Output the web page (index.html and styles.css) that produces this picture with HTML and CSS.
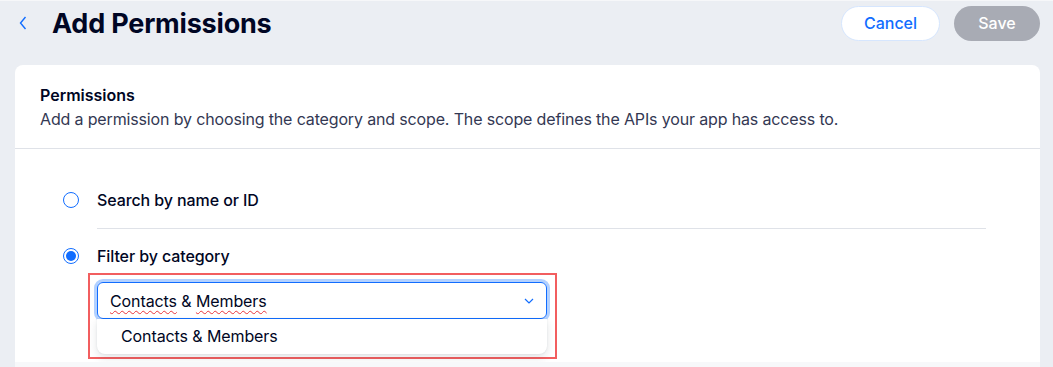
FILE: index.html
```html
<!DOCTYPE html>
<html lang="en">
<head>
  <meta charset="UTF-8">
  <meta name="viewport" content="width=device-width, initial-scale=1.0">
  <title>Add Permissions</title>
  <link rel="stylesheet" href="styles.css">
</head>
<body>
  <header class="page-header">
    <button class="back-btn" aria-label="Back">
      <svg width="8" height="14" viewBox="0 0 8 14"><path d="M6.5 1 L1.5 7 L6.5 13" fill="none" stroke="#116dff" stroke-width="1.4"/></svg>
    </button>
    <h1 class="page-title">Add Permissions</h1>
    <div class="header-actions">
      <button class="btn btn-cancel">Cancel</button>
      <button class="btn btn-save" disabled>Save</button>
    </div>
  </header>

  <section class="card">
    <div class="card-header">
      <h2 class="card-title">Permissions</h2>
      <p class="card-subtitle">Add a permission by choosing the category and scope. The scope defines the APIs your app has access to.</p>
    </div>

    <div class="card-body">
      <label class="radio-row">
        <span class="radio"></span>
        <span class="radio-label">Search by name or ID</span>
      </label>
      <div class="row-divider"></div>
      <label class="radio-row">
        <span class="radio checked"></span>
        <span class="radio-label">Filter by category</span>
      </label>

      <div class="highlight">
        <div class="select">
          <span class="select-value"><span class="typo">Contacts</span> &amp; <span class="typo">Members</span></span>
          <svg width="10" height="6" viewBox="0 0 10 6"><path d="M1 1 L5 5 L9 1" fill="none" stroke="#116dff" stroke-width="1.2"/></svg>
        </div>
        <ul class="dropdown">
          <li class="dropdown-item">Contacts &amp; Members</li>
        </ul>
      </div>
    </div>
    <div class="card-footer"></div>
  </section>
</body>
</html>
```

FILE: styles.css
```css
body {
  margin: 0;
  font-family: Inter, "Noto Sans", sans-serif;
  background: #ebeef3;
  color: #000624;
  border-top: 1px solid #f6f7f9;
}

.page-header {
  display: flex;
  align-items: center;
  height: 44px;
  padding: 0 13px 0 15px;
}

.back-btn {
  background: none;
  border: none;
  padding: 0 4px;
  width: 37px;
  height: 30px;
  display: flex;
  align-items: center;
  cursor: pointer;
}

.page-title {
  margin: 0;
  font-size: 27px;
  font-weight: 700;
  letter-spacing: -0.2px;
  line-height: 1;
  margin-top: 1px;
}

.header-actions {
  margin-left: auto;
  display: flex;
  gap: 14px;
}

.btn {
  height: 35px;
  border-radius: 18px;
  font-family: inherit;
  font-size: 16px;
  font-weight: 500;
  cursor: pointer;
}

.btn-cancel {
  width: 99px;
  background: #fff;
  color: #116dff;
  border: 1px solid #d6e6fe;
}

.btn-save {
  width: 86px;
  background: #a8abb4;
  color: #fff;
  border: none;
}

.card {
  margin: 20px 13px 0 15px;
  background: #fff;
  border-radius: 8px 8px 0 0;
  overflow: hidden;
}

.card-header {
  padding: 18px 25px 17px;
  border-bottom: 1px solid #dfe2e8;
}

.card-title {
  margin: 0;
  font-size: 16px;
  font-weight: 600;
  line-height: 24px;
}

.card-subtitle {
  margin: 0;
  font-size: 16px;
  line-height: 24px;
  color: #333853;
  letter-spacing: -0.15px;
}

.card-body {
  padding: 39px 54px 3px 48px;
}

.radio-row {
  display: flex;
  align-items: center;
  gap: 18px;
  height: 24px;
}

.radio {
  width: 14px;
  height: 14px;
  border: 1.5px solid #116dff;
  border-radius: 50%;
  box-sizing: content-box;
  display: flex;
  align-items: center;
  justify-content: center;
}

.radio.checked::after {
  content: "";
  width: 10px;
  height: 10px;
  border-radius: 50%;
  background: #116dff;
}

.radio-label {
  font-size: 16px;
  font-weight: 500;
  letter-spacing: -0.1px;
}

.row-divider {
  height: 1px;
  background: #dfe2e8;
  margin: 16px 0 15px 34px;
}

.highlight {
  width: 450px;
  margin: 5px 0 0 25px;
  border: 2px solid #f25e5f;
  padding: 7px 8px 3px 7px;
}

.select {
  display: flex;
  align-items: center;
  justify-content: space-between;
  height: 35px;
  padding: 0 12px 0 12px;
  border: 1px solid #116dff;
  border-radius: 6px;
  box-shadow: 0 0 0 3px #b3d1ff;
}

.select-value {
  font-size: 16px;
  color: #000624;
  letter-spacing: -0.1px;
}

.typo {
  text-decoration: underline wavy #e8343a;
  text-decoration-thickness: 1px;
  text-underline-offset: 3px;
}

.dropdown {
  list-style: none;
  margin: 0;
  padding: 0;
  background: #fff;
  border-radius: 0 0 8px 8px;
  box-shadow: 0 4px 8px rgba(22, 45, 61, 0.12), 0 0 2px rgba(22, 45, 61, 0.1);
}

.dropdown-item {
  height: 35px;
  line-height: 35px;
  padding-left: 24px;
  font-size: 16px;
  letter-spacing: -0.1px;
}

.card-footer {
  height: 20px;
  background: #f7f8fa;
}
```
